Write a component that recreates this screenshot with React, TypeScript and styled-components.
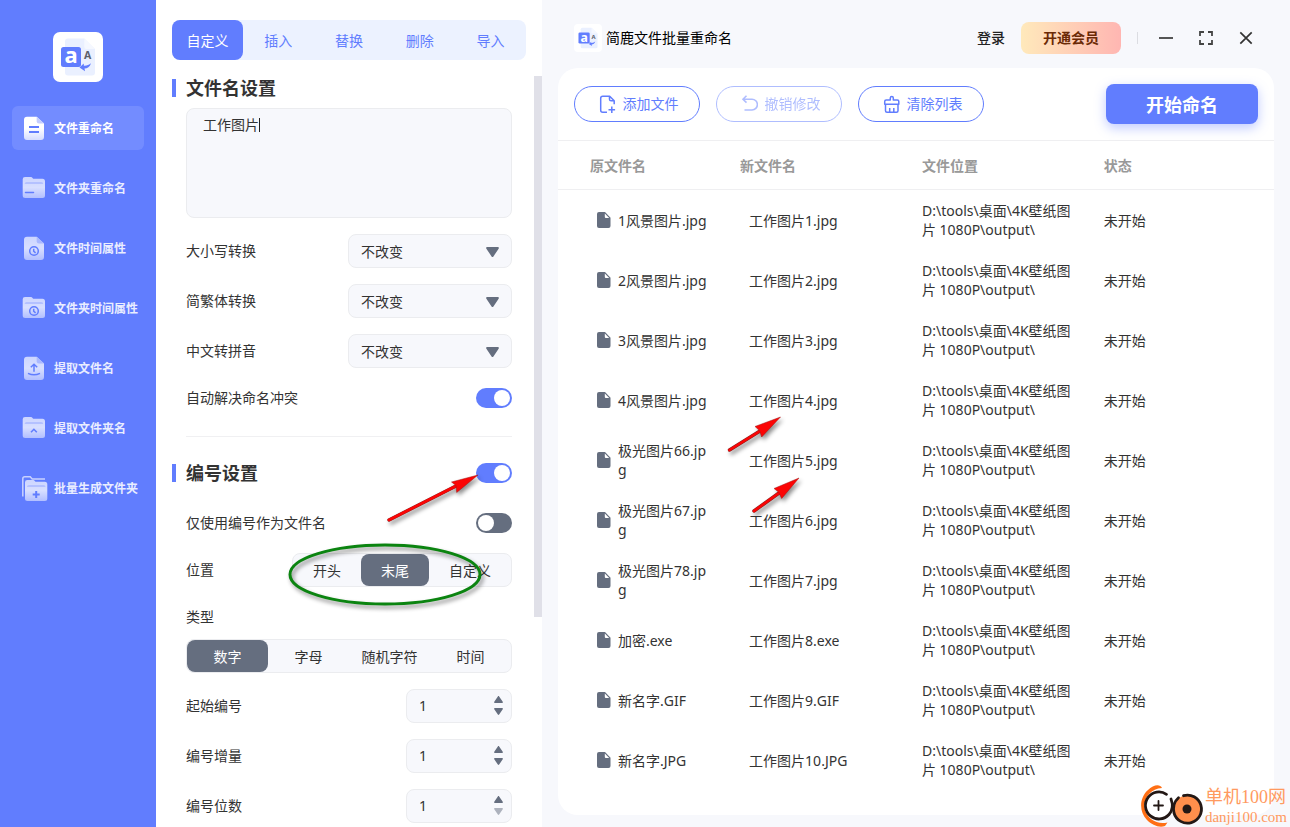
import React from 'react';
import styled, { createGlobalStyle } from 'styled-components';

const c = {
  blue: '#617dfe',
  pale: '#ecf2ff',
  panel: '#f7f8fc',
  line: '#ebecef',
  slate: '#656e7f',
  text: '#333333',
};

const GlobalStyle = createGlobalStyle`
  *, *::before, *::after { box-sizing: border-box; }
  body { margin: 0; }
  body, button, input, select, textarea {
    font-family: "Noto Sans", "Noto Sans CJK SC", sans-serif;
    font-size: 14px;
    line-height: 20px;
    color: ${c.text};
  }
  button { border: 0; padding: 0; background: none; cursor: pointer; }
  svg { display: block; flex: none; }
`;

const Shell = styled.div`
  position: relative;
  display: grid;
  grid-template-columns: 156px 386px minmax(0, 1fr);
  height: 100vh;
  overflow: hidden;
  background: ${c.panel};
`;

/* ---------- sidebar ---------- */
const Sidebar = styled.aside`
  display: flex;
  flex-direction: column;
  align-items: center;
  gap: 24px;
  padding: 32px 12px;
  background: ${c.blue};
`;
const Nav = styled.nav`
  display: flex;
  flex-direction: column;
  gap: 16px;
  width: 100%;
`;
const NavItem = styled.a<{ $active?: boolean }>`
  display: flex;
  align-items: center;
  gap: 8px;
  height: 44px;
  padding-left: 10px;
  border-radius: 6px;
  background: ${(p) => (p.$active ? '#738cff' : 'transparent')};
  color: ${(p) => (p.$active ? '#ffffff' : '#e9edff')};
  font-size: 12px;
  font-weight: 700;
  text-decoration: none;
  white-space: nowrap;
  svg { overflow: visible; }
  span { padding-top: 2px; }
`;

/* ---------- settings ---------- */
const Settings = styled.section`
  display: flex;
  flex-direction: column;
  gap: 16px;
  min-height: 0;
  padding-top: 20px;
  background: #ffffff;
`;
const Tabs = styled.div`
  display: flex;
  margin: 0 16px;
  border-radius: 8px;
  background: ${c.pale};
`;
const Tab = styled.button<{ $active?: boolean }>`
  flex: 1;
  height: 40px;
  padding-top: 2px;
  border-radius: 8px;
  background: ${(p) => (p.$active ? c.blue : 'transparent')};
  color: ${(p) => (p.$active ? '#ffffff' : c.blue)};
`;
const ScrollArea = styled.div`
  display: flex;
  flex: 1;
  min-height: 0;
`;
const ScrollBody = styled.div`
  flex: 1;
  padding: 0 22px 4px 30px;
  overflow-y: auto;
  scrollbar-width: none;
`;
const ScrollThumb = styled.div`
  width: 8px;
  height: 72%;
  background: #e0e0e8;
`;
const Stack = styled.div<{ $gap: number }>`
  display: flex;
  flex-direction: column;
  gap: ${(p) => p.$gap}px;
`;
const SectionHead = styled.div<{ $space: number }>`
  display: flex;
  align-items: center;
  justify-content: space-between;
  height: 24px;
  margin: 0 0 ${(p) => p.$space}px -14px;
`;
const SectionTitle = styled.h2`
  margin: 0;
  padding-left: 10px;
  border-left: 4px solid ${c.blue};
  font-size: 18px;
  line-height: 18px;
  font-weight: 700;
`;
const NameBox = styled.div`
  position: relative;
`;
const NameInput = styled.textarea`
  display: block;
  width: 100%;
  height: 110px;
  padding: 6px 16px;
  border: 1px solid ${c.line};
  border-radius: 8px;
  background: ${c.panel};
  resize: none;
  outline: none;
`;
const Caret = styled.span`
  position: absolute;
  left: 73px;
  top: 10px;
  width: 1px;
  height: 14px;
  background: #222222;
`;
const Field = styled.div`
  display: flex;
  align-items: center;
  justify-content: space-between;
`;
const SelectWrap = styled.div`
  position: relative;
  width: 164px;
  svg {
    position: absolute;
    right: 13px;
    top: 13px;
    pointer-events: none;
  }
`;
const Select = styled.select`
  appearance: none;
  display: block;
  width: 100%;
  height: 34px;
  padding: 2px 32px 0 12px;
  border: 1px solid ${c.line};
  border-radius: 8px;
  background: ${c.panel};
`;
const Switch = styled.input`
  appearance: none;
  width: 36px;
  height: 20px;
  margin: 0;
  padding: 2px;
  border-radius: 10px;
  background: ${c.slate};
  cursor: pointer;
  &::before {
    content: "";
    display: block;
    width: 16px;
    height: 16px;
    border-radius: 8px;
    background: #ffffff;
  }
  &:checked { background: ${c.blue}; }
  &:checked::before { margin-left: 16px; }
`;
const Divider = styled.hr`
  height: 1px;
  margin: 28px 0 24px;
  border: 0;
  background: #f0f0f2;
`;
const Segments = styled.div`
  display: flex;
  height: 34px;
  border: 1px solid ${c.line};
  border-radius: 8px;
  background: ${c.panel};
`;
const Segment = styled.label<{ $fill?: boolean }>`
  display: flex;
  flex: ${(p) => (p.$fill ? '1 1 0' : 'none')};
  align-items: center;
  justify-content: center;
  padding: 2px ${(p) => (p.$fill ? 0 : 20)}px 0;
  border-radius: 8px;
  cursor: pointer;
  &:has(input:checked) { background: ${c.slate}; color: #ffffff; }
  input { appearance: none; width: 0; height: 0; margin: 0; }
`;
const NumberBox = styled.div`
  display: flex;
  align-items: center;
  width: 106px;
  height: 34px;
  padding: 0 8px 0 12px;
  border: 1px solid ${c.line};
  border-radius: 8px;
  background: ${c.panel};
`;
const NumberInput = styled.input`
  appearance: textfield;
  flex: 1;
  min-width: 0;
  padding: 0;
  border: 0;
  background: none;
  outline: none;
  &::-webkit-inner-spin-button { appearance: none; }
`;
const Stepper = styled.div`
  display: flex;
  flex-direction: column;
  gap: 5px;
  padding-bottom: 2px;
`;
const StepButton = styled.button`
  line-height: 0;
  &:disabled { opacity: 0.5; }
`;

/* ---------- main ---------- */
const Main = styled.main`
  display: flex;
  flex-direction: column;
  min-width: 0;
  min-height: 0;
  padding: 0 16px 12px;
`;
const TitleBar = styled.header`
  display: flex;
  align-items: center;
  gap: 16px;
  flex: none;
  height: 68px;
  padding: 8px 16px 0;
`;
const AppName = styled.div`
  display: flex;
  align-items: center;
  gap: 4px;
  margin-right: auto;
  color: #000000;
`;
const Login = styled.a`
  color: #222222;
  font-weight: 500;
  text-decoration: none;
`;
const VipButton = styled.button`
  width: 100px;
  height: 32px;
  border-radius: 8px;
  background: linear-gradient(90deg, #ffe9bb, #ffb6b2);
  color: #6b2a06;
  font-weight: 700;
`;
const BarLine = styled.span`
  width: 1px;
  height: 12px;
  background: #dcdde2;
`;
const WindowButton = styled.button`
  width: 24px;
  height: 24px;
`;
const Card = styled.div`
  flex: 1;
  min-height: 0;
  border-radius: 20px;
  background: #ffffff;
  overflow: hidden;
`;
const Toolbar = styled.div`
  display: flex;
  align-items: center;
  gap: 16px;
  height: 73px;
  padding: 0 16px;
  border-bottom: 1px solid #efeff1;
`;
const PillButton = styled.button`
  display: flex;
  align-items: center;
  justify-content: center;
  gap: 7px;
  width: 126px;
  height: 36px;
  border: 1px solid ${c.blue};
  border-radius: 18px;
  color: ${c.blue};
  &:disabled { opacity: 0.5; }
`;
const StartButton = styled.button`
  width: 152px;
  height: 40px;
  padding-top: 2px;
  margin-left: auto;
  border-radius: 8px;
  background: ${c.blue};
  box-shadow: 0 4px 12px rgba(97, 125, 254, 0.4);
  color: #ffffff;
  font-size: 18px;
  font-weight: 700;
`;
const Table = styled.table`
  width: 100%;
  table-layout: fixed;
  border-collapse: separate;
  border-spacing: 0;
`;
const Th = styled.th<{ $width?: string; $pad: number }>`
  width: ${(p) => p.$width ?? 'auto'};
  height: 49px;
  padding: 2px 0 0 ${(p) => p.$pad}px;
  border-bottom: 1px solid #efeff1;
  color: #999999;
  text-align: left;
`;
const Td = styled.td<{ $pad: number }>`
  height: 60px;
  padding: 0 12px 0 ${(p) => p.$pad}px;
  line-height: 19px;
  word-break: break-all;
`;
const FileCell = styled.div`
  display: flex;
  align-items: center;
  gap: 7px;
`;

/* ---------- overlays ---------- */
const Mark = styled.svg<{ $x: number; $y: number }>`
  position: absolute;
  left: ${(p) => p.$x}px;
  top: ${(p) => p.$y}px;
  overflow: visible;
  pointer-events: none;
  filter: drop-shadow(2px 3px 2px rgba(0, 0, 0, 0.45));
`;
const Watermark = styled.div`
  position: absolute;
  right: 3px;
  bottom: 0;
  display: flex;
  align-items: flex-end;
  color: #ff9a60;
  font-family: "Liberation Serif", "Noto Sans CJK SC", serif;
  white-space: nowrap;
`;
const WatermarkText = styled.div`
  display: flex;
  flex-direction: column;
  span { font-size: 18px; line-height: 19px; }
  small { font-size: 15px; line-height: 20px; }
`;

/* ---------- drawings ---------- */
const AppLogo = ({ size }: { size: number }) => (
  <svg width={size} height={size} viewBox="0 0 50 50" aria-hidden="true">
    <rect width="50" height="50" rx="7" fill="#fff" />
    <path d="M15 6.500h16.300L42 17v23.500a3 3 0 0 1-3 3H15a3 3 0 0 1-3-3v-31a3 3 0 0 1 3-3z" fill="#eaf0ff" />
    <path d="M31.300 6.500 42 17h-8.500a2.200 2.200 0 0 1-2.200-2.200z" fill="#f5f8ff" />
    <rect x="8" y="15" width="20" height="20" rx="2.500" fill="#617dfe" />
    <text x="18" y="31.300" textAnchor="middle" fontFamily="Noto Sans" fontWeight="700" fontSize="22" fill="#fff">a</text>
    <text x="34.700" y="27.300" textAnchor="middle" fontFamily="Noto Sans" fontWeight="700" fontSize="10.500" fill="#5c5f6b">A</text>
    <path d="M38 31.300c-1.200 3.700-3.500 5.200-6.500 5.300l.5 2.600-5.500-3.700 4.200-4 .2 2.300c2.800.2 5-.8 7.100-2.500z" fill="#617dfe" />
  </svg>
);

const FILE = 'M5 .7h9.700L22 7.500V21a3 3 0 0 1-3 3H5a3 3 0 0 1-3-3V3.700a3 3 0 0 1 3-3z';
const FOLDER = 'M3 1h5.500c1 0 1.500.3 2 .9l.7.800h9.300A2.500 2.500 0 0 1 23 5.200v14.300A2.500 2.500 0 0 1 20.500 22H3.200A2.500 2.500 0 0 1 .7 19.500V3.300A2.300 2.300 0 0 1 3 1z';

type IconKind = 'file' | 'folder' | 'fileTime' | 'folderTime' | 'fileUp' | 'folderUp' | 'folderAdd';

const FileShape = ({ bright }: { bright?: boolean }) => (
  <>
    <path d={FILE} fill={bright ? 'url(#bright)' : 'url(#soft)'} />
    <path d="M14.700.7 22 7.500h-5a2.300 2.300 0 0 1-2.300-2.300z" fill={bright ? '#c3cdff' : '#a9b8ff'} />
  </>
);
const FolderShape = () => (
  <>
    <path d={FOLDER} fill="url(#soft)" />
    <path d="M2.700 8c0-1.300.8-2 2-2h14.500c1.200 0 2 .7 2 2z" fill="#b4c1ff" />
  </>
);
const Clock = ({ y }: { y: number }) => (
  <g stroke={c.blue} strokeWidth="1.500" fill="none">
    <circle cx="12" cy={y} r="4.300" />
    <path d={`M11.700 ${y - 2.300}v2.500l1.900 1.700`} />
  </g>
);

const NavIcon = ({ kind }: { kind: IconKind }) => (
  <svg width="24" height="24" viewBox="0 0 24 24" aria-hidden="true">
    {kind === 'file' && (
      <>
        <FileShape bright />
        <path d="M7 11h10M7 16h10" stroke={c.blue} strokeWidth="2" />
      </>
    )}
    {kind === 'folder' && (
      <>
        <FolderShape />
        <path d="M3.500 16.500h8" stroke={c.blue} strokeWidth="1.500" strokeLinecap="round" />
      </>
    )}
    {kind === 'fileTime' && (<><FileShape /><Clock y={15} /></>)}
    {kind === 'folderTime' && (<><FolderShape /><Clock y={15} /></>)}
    {kind === 'fileUp' && (
      <>
        <FileShape />
        <path d="M12 15.700V8.500M8.800 11.300 12 8.300l3.200 3M6 17.300c3.500 1.700 8.500 1.700 12 0" stroke={c.blue} strokeWidth="1.500" fill="none" />
      </>
    )}
    {kind === 'folderUp' && (
      <>
        <FolderShape />
        <path d="m9 16.300 2.900-3 2.900 3" stroke={c.blue} strokeWidth="1.600" fill="none" />
      </>
    )}
    {kind === 'folderAdd' && (
      <>
        <path d="M.8 20.500V2.800c0-1.200.8-2 2-2h5.400l2 2.200H23" stroke="#c9d2ff" strokeWidth="1.500" fill="none" />
        <g transform="translate(2.300 3)">
          <FolderShape />
          <path d="M11.900 12v7M8.400 15.500h7" stroke={c.blue} strokeWidth="2" />
        </g>
      </>
    )}
  </svg>
);

const Gradients = () => (
  <svg width="0" height="0" style={{ position: 'absolute' }} aria-hidden="true">
    <defs>
      <linearGradient id="bright" x1="0" y1="0" x2="0" y2="1">
        <stop offset="0.5" stopColor="#fff" />
        <stop offset="1" stopColor="#d5dcff" />
      </linearGradient>
      <linearGradient id="soft" x1="0" y1="0" x2="0" y2="1">
        <stop offset="0" stopColor="#ccd5ff" />
        <stop offset="0.5" stopColor="#d8dfff" />
        <stop offset="1" stopColor="#b2bfff" />
      </linearGradient>
    </defs>
  </svg>
);

const FileGlyph = () => (
  <svg width="14" height="16" viewBox="0 0 14 16" aria-hidden="true">
    <path d="M2 0h6l5.500 5.800V14a2 2 0 0 1-2 2H2a2 2 0 0 1-2-2V2a2 2 0 0 1 2-2z" fill={c.slate} />
    <path d="M7.800 1.500v3.200c0 .9.500 1.400 1.400 1.400h3z" fill="#fff" />
  </svg>
);
const Triangle = ({ w, h, up }: { w: number; h: number; up?: boolean }) => (
  <svg width={w} height={h} viewBox="0 0 14 10" preserveAspectRatio="none" aria-hidden="true">
    <path
      d="M1.300 0h11.400c1 0 1.500 1 .9 1.800L8 9.400c-.5.7-1.500.7-2 0L.4 1.800C-.2 1 .3 0 1.300 0z"
      fill={c.slate}
      transform={up ? 'rotate(180 7 5)' : undefined}
    />
  </svg>
);

const Arrow = ({ x, y, w, h, shaft, head }: { x: number; y: number; w: number; h: number; shaft: string; head: string }) => (
  <Mark $x={x} $y={y} width={w} height={h} aria-hidden="true">
    <path d={shaft} stroke="#8a2020" strokeWidth="3.400" strokeLinecap="round" />
    <path d={shaft} stroke="#fb0505" strokeWidth="2.600" strokeLinecap="round" />
    <path d={head} fill="#fb0505" stroke="#a31515" strokeWidth="0.500" />
  </Mark>
);

/* ---------- data ---------- */
const navItems: { label: string; kind: IconKind }[] = [
  { label: '文件重命名', kind: 'file' },
  { label: '文件夹重命名', kind: 'folder' },
  { label: '文件时间属性', kind: 'fileTime' },
  { label: '文件夹时间属性', kind: 'folderTime' },
  { label: '提取文件名', kind: 'fileUp' },
  { label: '提取文件夹名', kind: 'folderUp' },
  { label: '批量生成文件夹', kind: 'folderAdd' },
];
const tabs = ['自定义', '插入', '替换', '删除', '导入'];
const files: [string, string][] = [
  ['1风景图片.jpg', '工作图片1.jpg'],
  ['2风景图片.jpg', '工作图片2.jpg'],
  ['3风景图片.jpg', '工作图片3.jpg'],
  ['4风景图片.jpg', '工作图片4.jpg'],
  ['极光图片66.jpg', '工作图片5.jpg'],
  ['极光图片67.jpg', '工作图片6.jpg'],
  ['极光图片78.jpg', '工作图片7.jpg'],
  ['加密.exe', '工作图片8.exe'],
  ['新名字.GIF', '工作图片9.GIF'],
  ['新名字.JPG', '工作图片10.JPG'],
];

const SelectField = ({ id, label }: { id: string; label: string }) => (
  <Field>
    <label htmlFor={id}>{label}</label>
    <SelectWrap>
      <Select id={id}><option>不改变</option></Select>
      <Triangle w={13} h={10} />
    </SelectWrap>
  </Field>
);

const SwitchField = ({ id, label, on }: { id: string; label: string; on?: boolean }) => (
  <Field>
    <label htmlFor={id}>{label}</label>
    <Switch id={id} type="checkbox" role="switch" defaultChecked={on} />
  </Field>
);

const SegmentGroup = ({ name, items, value, fill }: { name: string; items: string[]; value: string; fill?: boolean }) => (
  <Segments role="radiogroup" aria-labelledby={`${name}-label`}>
    {items.map((item) => (
      <Segment key={item} $fill={fill}>
        <input type="radio" name={name} defaultChecked={item === value} />
        {item}
      </Segment>
    ))}
  </Segments>
);

const NumberField = ({ id, label, min }: { id: string; label: string; min: number }) => {
  const [value, setValue] = React.useState(1);
  return (
    <Field>
      <label htmlFor={id}>{label}</label>
      <NumberBox>
        <NumberInput id={id} type="number" value={value} onChange={(e) => setValue(Number(e.target.value))} />
        <Stepper>
          <StepButton type="button" aria-label="增加" onClick={() => setValue(value + 1)}>
            <Triangle w={9} h={7} up />
          </StepButton>
          <StepButton type="button" aria-label="减少" disabled={value <= min} onClick={() => setValue(value - 1)}>
            <Triangle w={9} h={7} />
          </StepButton>
        </Stepper>
      </NumberBox>
    </Field>
  );
};

export default function App() {
  return (
    <Shell>
      <GlobalStyle />
      <Gradients />

      <Sidebar>
        <AppLogo size={50} />
        <Nav>
          {navItems.map((item, i) => (
            <NavItem key={item.label} href="#" $active={i === 0}>
              <NavIcon kind={item.kind} />
              <span>{item.label}</span>
            </NavItem>
          ))}
        </Nav>
      </Sidebar>

      <Settings>
        <Tabs>
          {tabs.map((tab, i) => (
            <Tab key={tab} type="button" $active={i === 0}>{tab}</Tab>
          ))}
        </Tabs>
        <ScrollArea>
          <ScrollBody>
            <SectionHead $space={8}>
              <SectionTitle>文件名设置</SectionTitle>
            </SectionHead>
            <Stack $gap={20}>
              <Stack $gap={16}>
                <NameBox>
                  <NameInput aria-label="文件名设置" defaultValue="工作图片" />
                  <Caret />
                </NameBox>
                <SelectField id="case" label="大小写转换" />
                <SelectField id="script" label="简繁体转换" />
                <SelectField id="pinyin" label="中文转拼音" />
              </Stack>
              <SwitchField id="conflict" label="自动解决命名冲突" on />
            </Stack>

            <Divider />

            <SectionHead $space={28}>
              <SectionTitle id="numbering">编号设置</SectionTitle>
              <Switch type="checkbox" role="switch" aria-labelledby="numbering" defaultChecked />
            </SectionHead>
            <Stack $gap={20}>
              <SwitchField id="only" label="仅使用编号作为文件名" />
              <Field>
                <span id="position-label">位置</span>
                <SegmentGroup name="position" items={['开头', '末尾', '自定义']} value="末尾" />
              </Field>
              <Stack $gap={12}>
                <span id="type-label">类型</span>
                <Stack $gap={16}>
                  <SegmentGroup name="type" items={['数字', '字母', '随机字符', '时间']} value="数字" fill />
                  <NumberField id="start" label="起始编号" min={0} />
                  <NumberField id="step" label="编号增量" min={0} />
                  <NumberField id="digits" label="编号位数" min={1} />
                </Stack>
              </Stack>
            </Stack>
          </ScrollBody>
          <ScrollThumb />
        </ScrollArea>
      </Settings>

      <Main>
        <TitleBar>
          <AppName>
            <AppLogo size={28} />
            简鹿文件批量重命名
          </AppName>
          <Login href="#">登录</Login>
          <VipButton type="button">开通会员</VipButton>
          <BarLine />
          <WindowButton type="button" aria-label="最小化">
            <svg width="24" height="24" viewBox="0 0 24 24"><path d="M5 12h14" stroke="#555" strokeWidth="2" /></svg>
          </WindowButton>
          <WindowButton type="button" aria-label="全屏">
            <svg width="24" height="24" viewBox="0 0 24 24">
              <path d="M10 6H6v4M14 6h4v4M10 18H6v-4M14 18h4v-4" stroke="#444" strokeWidth="1.800" fill="none" />
            </svg>
          </WindowButton>
          <WindowButton type="button" aria-label="关闭">
            <svg width="24" height="24" viewBox="0 0 24 24"><path d="m6.300 6.300 11.400 11.400m0-11.400L6.300 17.700" stroke="#333" strokeWidth="1.700" /></svg>
          </WindowButton>
        </TitleBar>

        <Card>
          <Toolbar>
            <PillButton type="button">
              <svg width="20" height="20" viewBox="0 0 20 20" fill="none" stroke="currentColor" strokeWidth="1.500" strokeLinejoin="round">
                <path d="M11 18.200H6.700a2 2 0 0 1-2-2V4.300a2 2 0 0 1 2-2h7l4.500 4.500v3.400M13.500 2.500v2.700c0 1 .6 1.600 1.600 1.600h3M15.800 12.500v6.600M12.500 15.800h6.600" />
              </svg>
              添加文件
            </PillButton>
            <PillButton type="button" disabled>
              <svg width="20" height="20" viewBox="0 0 20 20" fill="none" stroke="currentColor" strokeWidth="1.600">
                <path d="M8.500 1.800 5 5.200l3.500 3.400M5 5.200h9a5.300 5.300 0 0 1 0 10.800H6.500" />
              </svg>
              撤销修改
            </PillButton>
            <PillButton type="button">
              <svg width="20" height="20" viewBox="0 0 20 20" fill="none" stroke="currentColor" strokeWidth="1.500" strokeLinejoin="round">
                <path d="M10.300 6V4a1.500 1.500 0 0 1 3 0v2h4a1.500 1.500 0 0 1 1.500 1.500v2.700H4.700V7.500A1.500 1.500 0 0 1 6.200 6zM5.500 10.200v6.500A1.500 1.500 0 0 0 7 18.200h9.500a1.500 1.500 0 0 0 1.500-1.500v-6.500M9.700 14v4.200M13.800 14v4.200" />
              </svg>
              清除列表
            </PillButton>
            <StartButton type="button">开始命名</StartButton>
          </Toolbar>
          <Table>
            <thead>
              <tr>
                <Th $width="23.2%" $pad={32}>原文件名</Th>
                <Th $width="25.4%" $pad={16}>新文件名</Th>
                <Th $width="25.4%" $pad={16}>文件位置</Th>
                <Th $pad={16}>状态</Th>
              </tr>
            </thead>
            <tbody>
              {files.map(([from, to]) => (
                <tr key={from}>
                  <Td $pad={39}>
                    <FileCell><FileGlyph /><span>{from}</span></FileCell>
                  </Td>
                  <Td $pad={25}>{to}</Td>
                  <Td $pad={16}>D:\tools\桌面\4K壁纸图片 1080P\output\</Td>
                  <Td $pad={16}>未开始</Td>
                </tr>
              ))}
            </tbody>
          </Table>
        </Card>
      </Main>

      <Arrow x={388} y={475} w={90} h={46} shaft="M1 45 68 11" head="M90 0 63.500 7l4.500 3.500.7 7z" />
      <Arrow x={728} y={417} w={53} h={34} shaft="M1.500 33 32 14" head="M52.500 0 27 9.500l4.500 4 2.200 6.500z" />
      <Arrow x={753} y={478} w={46} h={34} shaft="M1 33 26 15" head="M46 0 21 10.500l4.500 3.500 3.200 6.500z" />
      <Mark $x={288} $y={543} width={194} height={63} aria-hidden="true">
        <ellipse cx="97" cy="31.500" rx="95" ry="29.500" fill="none" stroke="#0b8410" strokeWidth="3" />
      </Mark>

      <Watermark>
        <svg width="65" height="43" viewBox="0 0 65 43" aria-hidden="true">
          <path d="M22 4C20-.5 13 1 8 6c-9 8-9 22-1 30 5 5 12 8 18 6l2.500-3.500C17 41 7 35 5 25S10 4.500 22 4z" fill="#ff6f14" />
          <circle cx="18.500" cy="21.500" r="14" fill="#fff" />
          <circle cx="47" cy="25" r="13.500" fill="#ff8f4c" />
          <path d="M26.500 10.300a13.500 13.500 0 1 0 2.500 20.200c3.500-4 4.300-9.500 2-15.500" fill="none" stroke="#231815" strokeWidth="2.800" strokeLinecap="round" />
          <path d="M38.500 13.800c-4.500 4-5.800 9-4.500 15.200a14 14 0 1 0 9.500-17.300" fill="none" stroke="#231815" strokeWidth="2.800" strokeLinecap="round" />
          <path d="M18.500 17v9M14 21.500h9" stroke="#231815" strokeWidth="1.800" strokeLinecap="round" />
          <circle cx="47" cy="25" r="4.500" fill="#231815" />
        </svg>
        <WatermarkText>
          <span>单机100网</span>
          <small>danji100.com</small>
        </WatermarkText>
      </Watermark>
    </Shell>
  );
}
